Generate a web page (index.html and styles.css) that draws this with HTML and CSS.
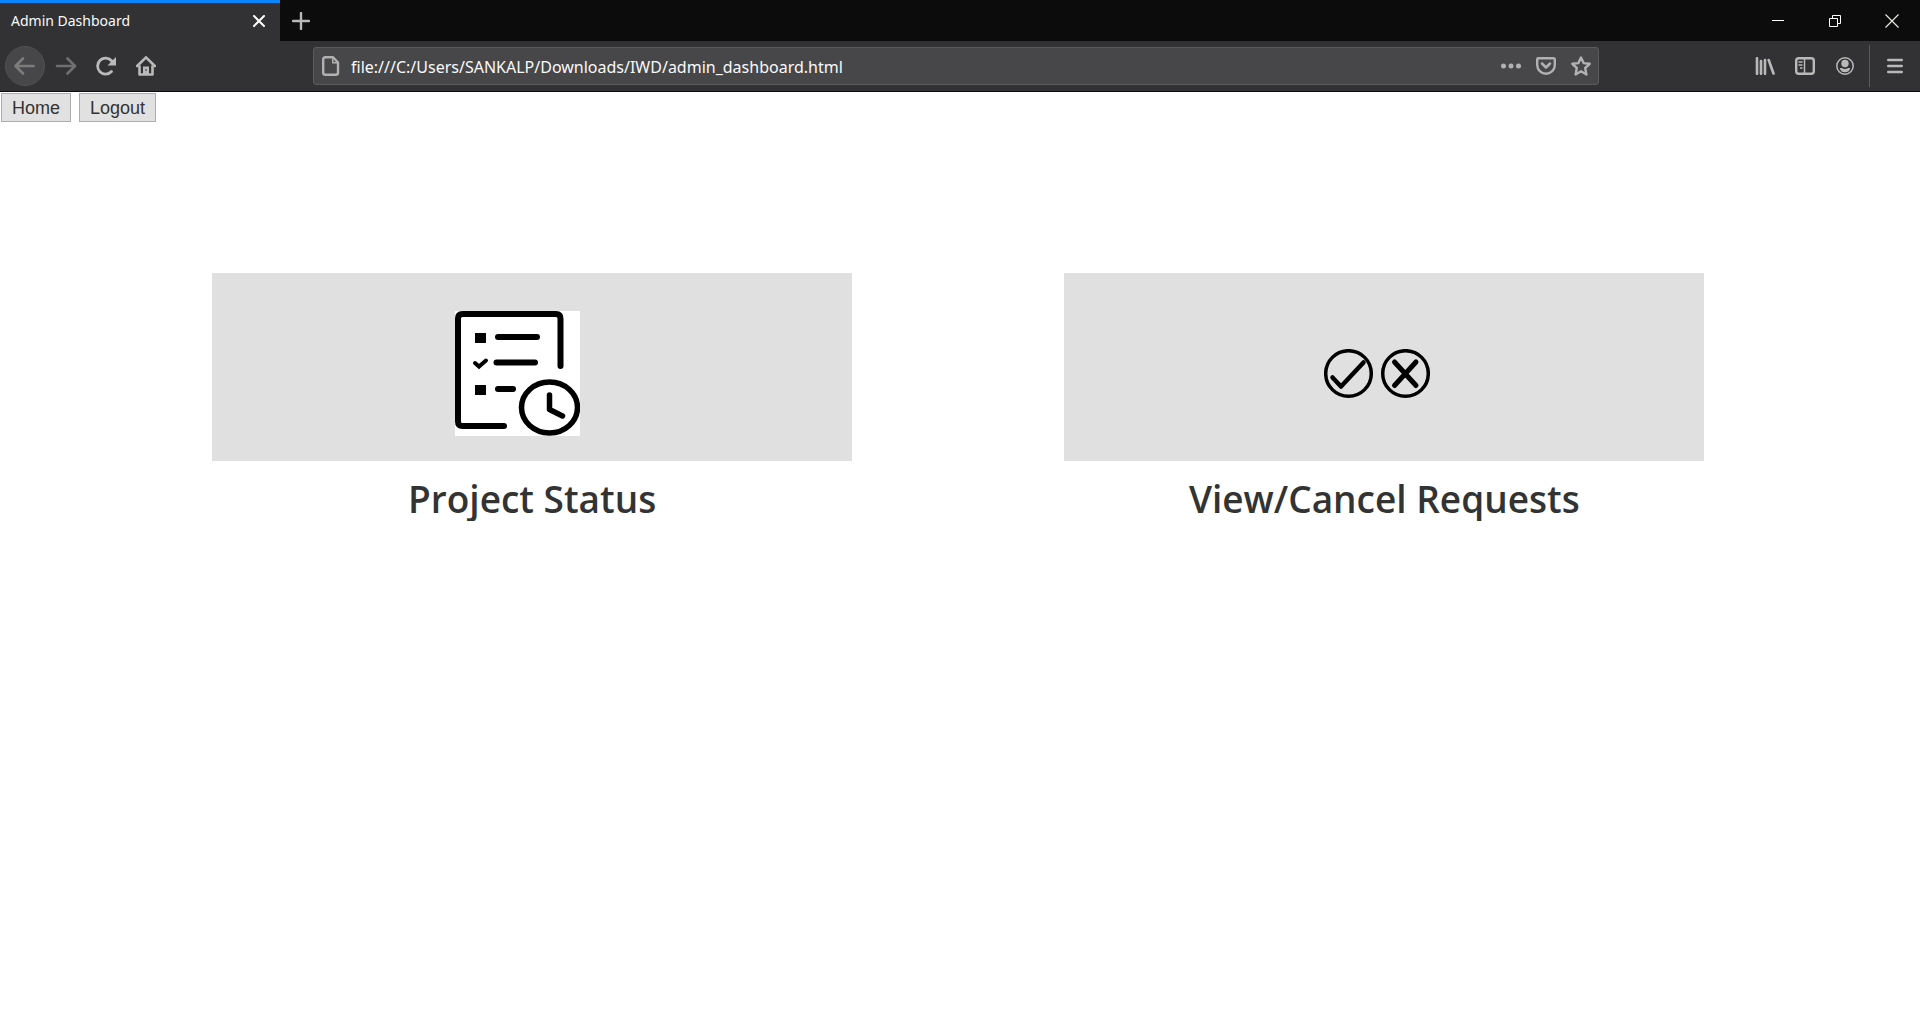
FILE: index.html
```html
<!DOCTYPE html>
<html lang="en">
<head>
<meta charset="utf-8">
<title>Admin Dashboard</title>
<link rel="stylesheet" href="styles.css">
</head>
<body>
<header class="browser">
  <div class="tabstrip">
    <div class="tab">
      <span class="tab-title">Admin Dashboard</span>
      <button class="icon-button tab-close" aria-label="Close tab"><svg width="12" height="12" viewBox="0 0 12 12"><path d="M1 1l10 10M11 1L1 11" stroke="#fff" stroke-width="2" stroke-linecap="round"/></svg></button>
    </div>
    <button class="icon-button new-tab" aria-label="New tab"><svg width="18" height="18" viewBox="0 0 18 18"><path d="M9 1v16M1 9h16" stroke="#b8b8b9" stroke-width="2.400" stroke-linecap="round"/></svg></button>
    <div class="window-controls">
      <button class="icon-button" aria-label="Minimize"><svg width="12" height="12" viewBox="0 0 12 12"><path d="M0 5.500h12" stroke="#fff"/></svg></button>
      <button class="icon-button" aria-label="Restore"><svg width="12" height="12" viewBox="0 0 12 12"><path d="M.5 3.500h8v8h-8zM3.500 3V.5h8v8H9" stroke="#fff"/></svg></button>
      <button class="icon-button" aria-label="Close window"><svg width="14" height="14" viewBox="0 0 14 14"><path d="M.5 .5l13 13M13.500 .5l-13 13" stroke="#e8e8e0" stroke-width="1.200"/></svg></button>
    </div>
  </div>
  <div class="toolbar">
    <nav class="nav-buttons" aria-label="History">
      <button class="icon-button back" aria-label="Back"><svg width="22" height="18" viewBox="0 0 22 18"><path d="M19.500 9H2M9 1.500L1.500 9 9 16.500" stroke="#7c7c7d" stroke-width="2.600" stroke-linecap="round" stroke-linejoin="round"/></svg></button>
      <button class="icon-button" aria-label="Forward"><svg width="22" height="18" viewBox="0 0 22 18"><path d="M2 9H20M12.500 1.500L20 9l-7.500 7.500" stroke="#6f6f70" stroke-width="2.600" stroke-linecap="round" stroke-linejoin="round"/></svg></button>
      <button class="icon-button" aria-label="Reload"><svg width="20" height="20" viewBox="0 0 20 20"><path d="M15.500 15.500A8 8 0 1 1 15.800 5" stroke="#b9b9ba" stroke-width="2.800" stroke-linecap="round"/><path d="M20 1v8.500h-8.500z" fill="#b9b9ba"/></svg></button>
      <button class="icon-button" aria-label="Home page"><svg width="20" height="20" viewBox="0 0 20 20"><path d="M1.200 10L10 1.300 18.800 10" stroke="#b9b9ba" stroke-width="2.600" stroke-linecap="round" stroke-linejoin="round"/><path d="M3.500 9.500v9h13v-9" stroke="#b9b9ba" stroke-width="2.600" stroke-linejoin="round"/><path d="M7 18v-7.500h6V18z" fill="#b9b9ba"/><path d="M9.500 13h1v2h-1z" fill="#323234"/></svg></button>
    </nav>
    <div class="address">
      <svg class="page-icon" width="18" height="20" viewBox="0 0 18 20"><path d="M3.500 1.200H11L16 6.500v10a2.300 2.300 0 0 1-2.300 2.300H3.500a2.300 2.300 0 0 1-2.300-2.300v-13a2.300 2.300 0 0 1 2.300-2.300z" stroke="#b1b1b2" stroke-width="2.400" stroke-linejoin="round"/><path d="M10.800 1.500v5.200H16" stroke="#b1b1b2" stroke-width="1.500"/></svg>
      <input class="url" type="text" aria-label="Address" value="file:///C:/Users/SANKALP/Downloads/IWD/admin_dashboard.html">
      <button class="icon-button" aria-label="Page actions"><svg width="20" height="6" viewBox="0 0 20 6"><g fill="#b1b1b2"><circle cx="2.500" cy="3" r="2.500"/><circle cx="10" cy="3" r="2.500"/><circle cx="17.500" cy="3" r="2.500"/></g></svg></button>
      <button class="icon-button" aria-label="Save to Pocket"><svg width="20" height="18" viewBox="0 0 20 18"><path d="M2.500 1.200h15q1.300 0 1.300 1.300V8a8.800 8.800 0 0 1-17.600 0V2.500q0-1.300 1.300-1.300z" stroke="#b1b1b2" stroke-width="2.400"/><path d="M6 6.500l4 4 4-4" stroke="#b1b1b2" stroke-width="2.500" stroke-linecap="round" stroke-linejoin="round"/></svg></button>
      <button class="icon-button" aria-label="Bookmark"><svg width="20" height="20" viewBox="0 0 20 20"><path d="M10 1.500l2.600 5.600 6.100.7-4.500 4.200 1.200 6.500L10 15.300l-5.400 3.200L5.800 12 1.300 7.800l6.100-.7z" stroke="#b1b1b2" stroke-width="2.400" stroke-linejoin="round"/></svg></button>
    </div>
    <div class="tools">
      <button class="icon-button" aria-label="Library"><svg width="20" height="18" viewBox="0 0 20 18"><path d="M2 1.200v15.600M6 4v12.800M10 3v13.800M13.700 3l4.800 13.500" stroke="#b9b9ba" stroke-width="2.600" stroke-linecap="round"/></svg></button>
      <button class="icon-button" aria-label="Sidebars"><svg width="20" height="18" viewBox="0 0 20 18"><rect x="1.200" y="1.200" width="17.600" height="15.600" rx="2.500" stroke="#b9b9ba" stroke-width="2.400"/><path d="M9.500 2v14M3.500 5h4M3.500 8h4M5 11h2.500" stroke="#b9b9ba" stroke-width="1.500"/></svg></button>
      <button class="icon-button" aria-label="Account"><svg width="18" height="18" viewBox="0 0 18 18"><circle cx="9" cy="9" r="8.200" stroke="#b9b9ba" stroke-width="1.500"/><circle cx="9" cy="6.500" r="3.700" fill="#b9b9ba"/><path d="M3.800 11h2q3.200 2.200 6.400 0h2q-.8 4.200-5.200 4.200T3.800 11z" fill="#b9b9ba"/></svg></button>
      <button class="icon-button menu" aria-label="Menu"><svg width="16" height="16" viewBox="0 0 16 16"><path d="M1.200 2h13.600M1.200 8h13.600M1.200 14h13.600" stroke="#b9b9ba" stroke-width="2.400" stroke-linecap="round"/></svg></button>
    </div>
  </div>
</header>
<main>
  <nav class="page-nav" aria-label="Site">
    <button class="page-button">Home</button>
    <button class="page-button">Logout</button>
  </nav>
  <div class="cards">
    <section class="card">
      <div class="card-art">
        <svg class="status-art" width="125" height="125" viewBox="0 0 125 125"><path d="M0 0h125v125H0z" fill="#fff"/><path d="M105.500 55V7.500q0-4.500-4.500-4.500H7.500Q3 3 3 7.500v103q0 4.500 4.500 4.500H49" stroke="#000" stroke-width="6" stroke-linecap="round"/><path d="M43 26h39M41.500 51.500H80M43 78h15" stroke="#000" stroke-width="6" stroke-linecap="round"/><path d="M20 22h11v10H20zM20 74h11v10H20z" fill="#000"/><path d="M20 52l4 3.500 7-6" stroke="#000" stroke-width="4" stroke-linecap="round"/><ellipse cx="94.500" cy="96.500" rx="28" ry="25.500" stroke="#000" stroke-width="5.500"/><path d="M94.500 84v14.500l13 6.500" stroke="#000" stroke-width="5.500" stroke-linecap="round" stroke-linejoin="round"/></svg>
      </div>
      <h2 class="card-title">Project Status</h2>
    </section>
    <section class="card">
      <div class="card-art">
        <svg class="request-art" width="106" height="50" viewBox="0 0 106 50"><circle cx="24.500" cy="24.500" r="22.800" stroke="#000" stroke-width="3.500"/><circle cx="81.500" cy="24.500" r="22.800" stroke="#000" stroke-width="3.500"/><path d="M8.500 28.500l8.500 9 22.500-24" stroke="#000" stroke-width="4.500" stroke-linecap="round" stroke-linejoin="round"/><path d="M70.500 13L92 36.500M92 13L70.500 36.500" stroke="#000" stroke-width="5" stroke-linecap="round"/></svg>
      </div>
      <h2 class="card-title">View/Cancel Requests</h2>
    </section>
  </div>
</main>
</body>
</html>
```
FILE: styles.css
```css
* {
  box-sizing: border-box;
}

body {
  margin: 0;
  background: #fff;
  color: #333;
  font-family: "Liberation Sans", Arial, sans-serif;
}

svg {
  display: block;
  fill: none;
  flex: none;
}

.icon-button {
  display: flex;
  align-items: center;
  justify-content: center;
  flex: none;
  padding: 0;
  border: 0;
  background: none;
}

.browser {
  background: #323234;
  border-bottom: 1px solid #0c0c0d;
  font-family: "Noto Sans", sans-serif;
  color: #f9f9fa;
}

.tabstrip {
  display: flex;
  height: 41px;
  background: #0c0c0d;
}

.tab {
  display: flex;
  align-items: center;
  justify-content: space-between;
  width: 280px;
  padding: 0 15px 2px 11px;
  border-top: 3px solid #0a84ff;
  background: #323234;
}

.tab-title {
  font-size: 14px;
  line-height: 20px;
}

.new-tab {
  width: 42px;
}

.window-controls {
  display: flex;
  margin-left: auto;
}

.window-controls .icon-button {
  width: 57px;
}

.toolbar {
  display: flex;
  align-items: center;
  height: 50px;
}

.nav-buttons {
  display: flex;
  width: 313px;
  padding-left: 5px;
}

.nav-buttons .icon-button {
  width: 40px;
  height: 40px;
}

.nav-buttons .back {
  margin-right: 1px;
  border: 1px solid #505052;
  border-radius: 50%;
  background: #474749;
}

.address {
  display: flex;
  align-items: center;
  flex: 1;
  height: 38px;
  border: 1px solid #5a5a5c;
  border-radius: 3px;
  background: #474749;
}

.page-icon {
  margin: 0 11px 0 8px;
}

.url {
  flex: 1;
  min-width: 0;
  padding: 2px 0 0;
  border: 0;
  background: none;
  color: #f9f9fa;
  font-family: "Noto Sans", sans-serif;
  font-size: 16px;
  line-height: 24px;
}

.address .icon-button {
  width: 35px;
  height: 36px;
}

.tools {
  display: flex;
  align-items: center;
  padding-left: 146px;
}

.tools .icon-button {
  width: 40px;
  height: 40px;
}

.tools .menu {
  width: 51px;
  height: 42px;
  margin-left: 4px;
  border-left: 1px solid #5a5a5c;
}

.page-nav {
  display: flex;
  gap: 8px;
  padding: 1px;
}

.page-button {
  height: 29px;
  padding: 0 10px;
  border: 1px solid #adadad;
  background: #e1e1e1;
  color: #333;
  font-family: "Liberation Sans", Arial, sans-serif;
  font-size: 18px;
  line-height: 24px;
}

.cards {
  display: flex;
  padding-top: 150px;
}

.card {
  width: 33.333%;
  margin-left: 11.05%;
}

.card-art {
  display: flex;
  justify-content: center;
  height: 188px;
  padding: 38px 30px 0 0;
  background: #e0e0e0;
}

.request-art {
  margin-top: 38px;
  margin-left: 16px;
}

.card-title {
  margin: 16px 0 0;
  font-family: "Trebuchet MS", "Open Sans", sans-serif;
  font-size: 37px;
  font-weight: 600;
  line-height: 44px;
  text-align: center;
}
```
